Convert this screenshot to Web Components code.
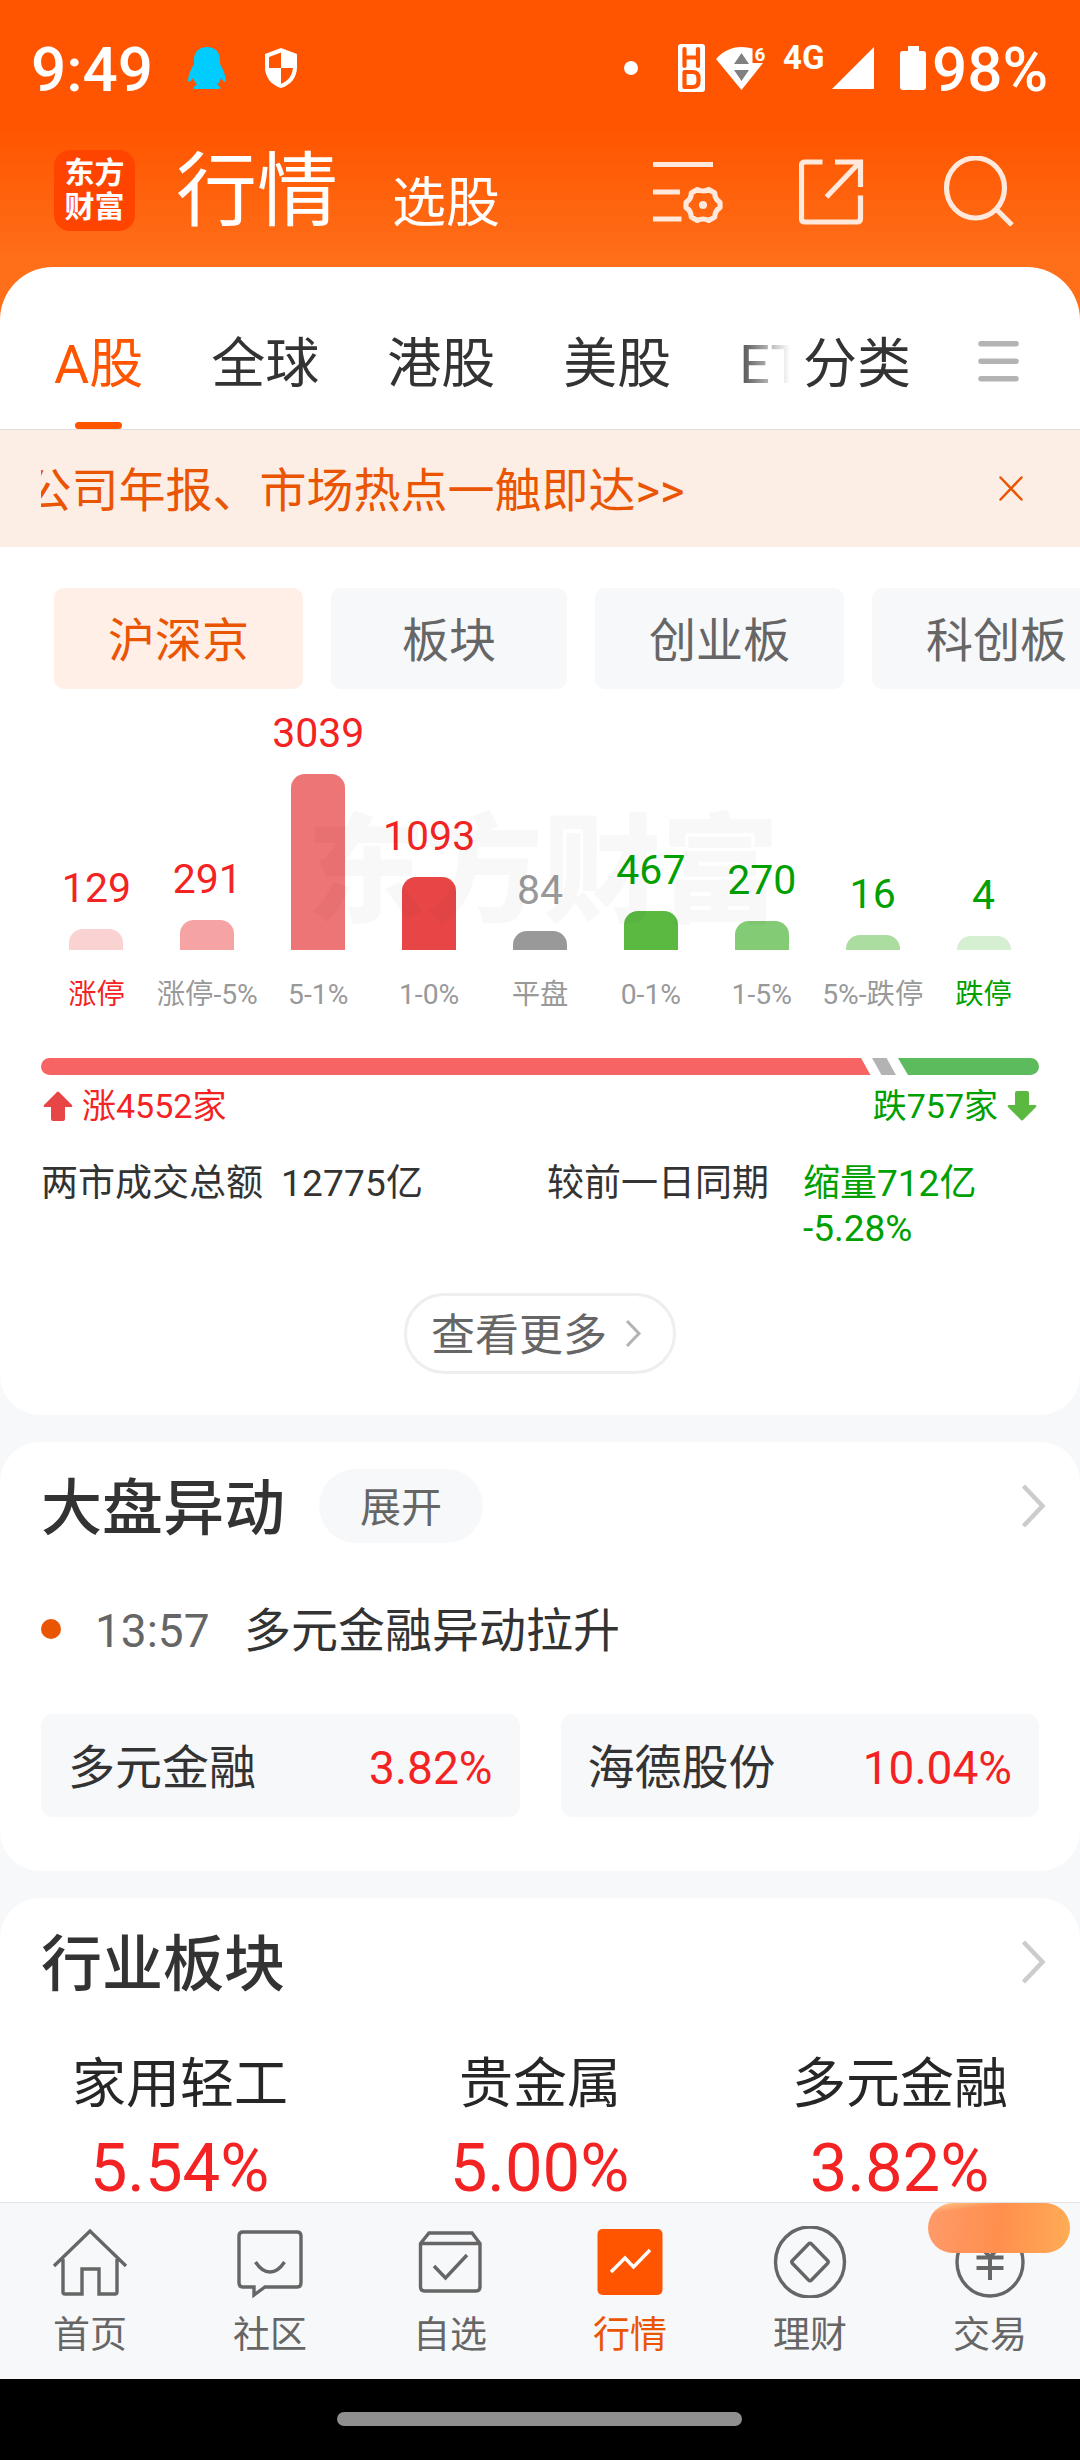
<!DOCTYPE html>
<html lang="zh-CN">
<head>
<meta charset="utf-8">
<title>行情</title>
<style>
  body {
    margin: 0;
    width: 1080px;
    height: 2460px;
    overflow: hidden;
    font-family: Roboto, "Noto Sans CJK SC", sans-serif;
    color: #333;
    --up: #f42323;
    --down: #00a000;
    --brand: #ff5500;
    --accent: #ea5504;
    --soft: #f7f8fa;
  }
</style>
</head>
<body>
<market-app></market-app>
<script>
class StatusBar extends HTMLElement {
  constructor() {
    super();
    this.attachShadow({ mode: "open" });
    this.shadowRoot.innerHTML = `
      <style>
        :host {
          display: flex;
          align-items: center;
          height: 136px;
          padding: 0 31px;
          box-sizing: border-box;
          color: white;
          font-size: 62px;
          font-weight: 500;
          line-height: 138px;
        }
        svg { display: block; flex: none; overflow: visible; }
        .time { width: 157px; padding-top: 3px; }
        .shield { margin-left: 39px; }
        .dot { width: 14px; height: 14px; border-radius: 50%; background: white; margin-left: auto; }
        .hd { margin-left: 40px; }
        .wifi { margin-left: 11px; }
        .net { margin-left: 17px; align-self: flex-start; font-size: 33px; line-height: 116px; width: 49px; font-weight: 700; }
        .battery { margin-left: 26px; }
        .level { width: 117px; margin-left: 6px; padding-top: 3px; white-space: nowrap; }
      </style>
      <span class="time">9:49</span>
      <svg width="38" height="42" viewBox="0 0 38 42" fill="#00ccff">
        <path d="M19 0C11 0 6 5 6 13l0 4C3 22 0 29 0 34c1 2 3 0 5-3 1 3 3 5 4 7-3 1-4 2-3 4h26c1-2 0-3-3-4 2-2 3-4 4-7 2 3 4 5 5 3 0-5-3-12-6-17v-4C32 5 27 0 19 0z"/>
      </svg>
      <svg class="shield" width="32" height="40" viewBox="0 0 32 40">
        <path d="M16 0 32 6v13c0 10-6 18-16 21C6 37 0 29 0 19V6z" fill="white"/>
        <path d="M16 4.5V20H4V9zM16 20h12c-1 8-5 13-12 16z" fill="#ff5500"/>
      </svg>
      <span class="dot"></span>
      <svg class="hd" width="27" height="48" viewBox="0 0 27 48">
        <rect width="27" height="48" rx="3" fill="white"/>
        <path d="M6.500 5v17M20 5v17M6.500 13.500h13.500" fill="none" stroke="#ff5500" stroke-width="4.200" stroke-linecap="round"/>
        <path d="M6.500 28h8q6 0 6 6v3q0 6-6 6h-8z" fill="none" stroke="#ff5500" stroke-width="4.200" stroke-linejoin="round"/>
      </svg>
      <svg class="wifi" width="50" height="43" viewBox="0 0 50 43">
        <path d="M0 12C8 3 17 0 25.500 0q6 0 11 1.500V16H47L25.500 43z" fill="white"/>
        <path d="M18 17 25.500 6 33 17zM18 23h15L25.500 34z" fill="#808080"/>
        <text x="38.500" y="14" font-size="19" font-weight="700" fill="white">6</text>
      </svg>
      <span class="net">4G</span>
      <svg width="42" height="42" viewBox="0 0 42 42"><path d="M42 0v42H0z" fill="white"/></svg>
      <svg class="battery" width="26" height="44" viewBox="0 0 26 44">
        <path d="M8 0h11v5h4q3 0 3 3v33q0 3-3 3H3q-3 0-3-3V8q0-3 3-3h5z" fill="white"/>
      </svg>
      <span class="level">98%</span>
    `;
  }
}
customElements.define("status-bar", StatusBar);

class AppHeader extends HTMLElement {
  constructor() {
    super();
    this.attachShadow({ mode: "open" });
    this.shadowRoot.innerHTML = `
      <style>
        :host {
          display: flex;
          align-items: flex-start;
          height: 131px;
          padding: 0 66px 0 54px;
          box-sizing: border-box;
          color: white;
        }
        .logo {
          width: 81px;
          height: 81px;
          margin-top: 14px;
          padding-top: 6px;
          box-sizing: border-box;
          border-radius: 16px;
          background: #ff4400;
          font-size: 30px;
          line-height: 34px;
          font-weight: 700;
          text-align: center;
        }
        .title { margin-left: 41px; font-size: 81px; line-height: 112px; }
        .sub { margin-left: 54px; font-size: 54px; line-height: 136px; }
        .icons { display: flex; margin: 20px 0 0 auto; }
        svg { display: block; fill: none; stroke: #ffe9dd; stroke-width: 5.200; }
        svg + svg { margin-left: 74px; }
        svg.search { margin-left: 78px; }
      </style>
      <div class="logo">东方<br>财富</div>
      <span class="title">行情</span>
      <span class="sub">选股</span>
      <div class="icons">
        <svg width="72" height="72" viewBox="0 0 72 72">
          <path d="M0 8.500h60M0 36h27M0 63h28.500"/>
          <path stroke-linejoin="round" d="M44.300 33.500q6 3 11.400 0l6 3.500q0 6 5.300 9.500v5q-5.300 3.500-5.300 9.500l-6 3.500q-5.700-3-11.400 0l-6-3.500q0-6-5.300-9.500v-5q5.300-3.500 5.300-9.500z"/>
          <circle cx="50" cy="49" r="4" fill="#ffe9dd" stroke="none"/>
        </svg>
        <svg width="66" height="72" viewBox="0 0 66 72">
          <path d="M23.500 6H6q-3.500 0-3.500 3.500v53q0 3.500 3.500 3.500h52q3.500 0 3.500-3.500V39.500M36 6h25.500v25M60 7 27.500 41"/>
        </svg>
        <svg class="search" width="71" height="72" viewBox="0 0 71 72">
          <ellipse cx="32.500" cy="32" rx="29" ry="30"/>
          <path d="m53 53 16 16"/>
        </svg>
      </div>
    `;
  }
}
customElements.define("app-header", AppHeader);

class MarketTabs extends HTMLElement {
  constructor() {
    super();
    this.attachShadow({ mode: "open" });
    this.shadowRoot.innerHTML = `
      <style>
        :host {
          display: flex;
          height: 163px;
          box-sizing: border-box;
          padding: 58px 61px 0 54px;
          border-bottom: 1px solid #dedede;
          font-size: 54px;
          line-height: 80px;
          white-space: nowrap;
        }
        .list {
          display: flex;
          gap: 68px;
          width: 736px;
          overflow: hidden;
          -webkit-mask-image: linear-gradient(to right, #000 calc(100% - 58px), transparent);
          mask-image: linear-gradient(to right, #000 calc(100% - 58px), transparent);
        }
        .active { color: var(--brand); }
        .active::after {
          content: "";
          display: block;
          width: 47px;
          height: 7px;
          margin: 17px auto 0;
          border-radius: 4px;
          background: var(--brand);
        }
        .sort { margin-left: 13px; }
        svg { display: block; margin: 16px 0 0 auto; }
      </style>
      <div class="list">
        <span class="active">A股</span><span>全球</span><span>港股</span><span>美股</span><span>ETF</span>
      </div>
      <span class="sort">分类</span>
      <svg width="41" height="42" viewBox="0 0 41 42" stroke="#b3b3b3" stroke-width="5.500" stroke-linecap="round">
        <path d="M3 2.750h35M3 20.250h35M3 37.750h35"/>
      </svg>
    `;
  }
}
customElements.define("market-tabs", MarketTabs);

class NoticeBar extends HTMLElement {
  constructor() {
    super();
    this.attachShadow({ mode: "open" });
    this.shadowRoot.innerHTML = `
      <style>
        :host {
          display: flex;
          height: 117px;
          padding: 0 57px 0 41px;
          background: #fdeee5;
          color: var(--accent);
          font-size: 47px;
          line-height: 121px;
        }
        /* the ticker is mid-scroll, so its first glyph is cut */
        .ticker { flex: 1; overflow: hidden; white-space: nowrap; }
        .ticker span { margin-left: -16.5px; }
        svg { display: block; margin-top: 46px; }
      </style>
      <div class="ticker"><span><slot></slot></span></div>
      <svg width="24" height="26" viewBox="0 0 24 26" fill="none" stroke="#ea5504" stroke-width="2.500" stroke-linecap="round">
        <path d="M1.500 1.500l21 22M22.500 1.500l-21 22"/>
      </svg>
    `;
  }
}
customElements.define("notice-bar", NoticeBar);

class FilterChip extends HTMLElement {
  constructor() {
    super();
    this.attachShadow({ mode: "open" });
    this.shadowRoot.innerHTML = `
      <style>
        :host {
          flex: none;
          min-width: 236px;
          height: 101px;
          box-sizing: border-box;
          padding: 0 54px;
          border-radius: 10px;
          background: var(--soft);
          color: #666;
          font-size: 47px;
          line-height: 106px;
          text-align: center;
          white-space: nowrap;
        }
        :host([active]) { background: #ffefe7; color: var(--accent); }
      </style>
      <slot></slot>
    `;
  }
}
customElements.define("filter-chip", FilterChip);

class BreadthChart extends HTMLElement {
  constructor() {
    super();
    this.attachShadow({ mode: "open" });
    const bars = [
      { value: 129, label: "涨停", height: 21, fill: "#fad2d2", tone: "up", strong: true },
      { value: 291, label: "涨停-5%", height: 30, fill: "#f5a3a3", tone: "up" },
      { value: 3039, label: "5-1%", height: 176, fill: "#ee7575", tone: "up" },
      { value: 1093, label: "1-0%", height: 73, fill: "#e84646", tone: "up" },
      { value: 84, label: "平盘", height: 19, fill: "#999", tone: "flat" },
      { value: 467, label: "0-1%", height: 39, fill: "#5bb942", tone: "down" },
      { value: 270, label: "1-5%", height: 29, fill: "#83cb74", tone: "down" },
      { value: 16, label: "5%-跌停", height: 15, fill: "#acdda0", tone: "down" },
      { value: 4, label: "跌停", height: 14, fill: "#d6efd2", tone: "down", strong: true }
    ];
    this.shadowRoot.innerHTML = `
      <style>
        :host { display: block; position: relative; height: 322px; padding: 0 41px; }
        .bars { display: grid; grid-template-columns: repeat(9, 1fr); height: 100%; }
        .col { display: flex; flex-direction: column; justify-content: flex-end; align-items: center; white-space: nowrap; }
        .value { font-size: 41px; line-height: 48px; margin-bottom: 17px; }
        .bar { width: 54px; border-radius: 14px 14px 0 0; }
        .label { font-size: 28.3px; line-height: 34px; padding-top: 28px; margin-bottom: -1px; color: #999; }
        .up .value, .up .strong { color: var(--up); }
        .down .value, .down .strong { color: var(--down); }
        .flat .value { color: #999; }
        .watermark {
          position: absolute;
          left: 307px;
          top: 104px;
          font-size: 118px;
          line-height: 160px;
          font-weight: 900;
          color: rgba(0, 0, 0, 0.027);
        }
      </style>
      <div class="bars">
        ${bars.map(b => `
          <div class="col ${b.tone}">
            <span class="value">${b.value}</span>
            <div class="bar" style="height:${b.height}px;background:${b.fill}"></div>
            <span class="label ${b.strong ? "strong" : ""}">${b.label}</span>
          </div>`).join("")}
      </div>
      <div class="watermark">东方财富</div>
    `;
  }
}
customElements.define("breadth-chart", BreadthChart);

class BreadthRatio extends HTMLElement {
  constructor() {
    super();
    this.attachShadow({ mode: "open" });
    this.shadowRoot.innerHTML = `
      <style>
        :host { display: block; padding: 47px 41px 0; }
        svg { display: block; }
        .counts { display: flex; justify-content: space-between; margin-top: 11px; padding: 0 2px; font-size: 34px; line-height: 40px; }
        .counts span { display: flex; align-items: center; gap: 9px; }
        .up { color: var(--up); }
        .down { color: var(--down); }
        .stats { display: grid; grid-template-columns: 506px 256px 1fr; margin-top: 35px; font-size: 37px; line-height: 45px; white-space: nowrap; }
        .stats b { font-weight: 400; margin-left: 18px; letter-spacing: 0.2px; }
      </style>
      <svg width="998" height="17" viewBox="0 0 998 17">
        <path d="M8.500 0H820l9.500 17H8.500a8.500 8.500 0 0 1 0-17z" fill="#f76464"/>
        <path d="M831 0h14.500l9.500 17h-14.500z" fill="#b3b3b3"/>
        <path d="M857 0h132.500a8.500 8.500 0 0 1 0 17H867z" fill="#5cbb5c"/>
      </svg>
      <div class="counts">
        <span class="up">
          <svg width="30" height="30" viewBox="0 0 30 30"><path d="M14 1q1-1 2 0l13 13q1 2-1 2h-6v12q0 2-2 2H10q-2 0-2-2V16H2q-2 0-1-2z" fill="#e84646"/></svg>涨4552家
        </span>
        <span class="down">
          跌757家<svg width="30" height="30" viewBox="0 0 30 30"><path d="M14 29q1 1 2 0l13-13q1-2-1-2h-6V2q0-2-2-2H10Q8 0 8 2v12H2q-2 0-1 2z" fill="#5bb942"/></svg>
        </span>
      </div>
      <div class="stats">
        <div>两市成交总额<b>12775亿</b></div>
        <div>较前一日同期</div>
        <div class="down">缩量712亿<br>-5.28%</div>
      </div>
    `;
  }
}
customElements.define("breadth-ratio", BreadthRatio);

class MoreButton extends HTMLElement {
  constructor() {
    super();
    this.attachShadow({ mode: "open" });
    this.shadowRoot.innerHTML = `
      <style>
        :host {
          display: flex;
          width: 272px;
          height: 81px;
          box-sizing: border-box;
          margin: 42px auto 0;
          padding-left: 24px;
          border: 3px solid #eee;
          border-radius: 41px;
          color: #666;
          font-size: 44px;
          line-height: 81px;
          white-space: nowrap;
        }
        svg { display: block; margin: 22px 0 0 17px; }
      </style>
      <slot></slot>
      <svg width="20" height="32" viewBox="0 0 20 32" fill="none" stroke="#b3b3b3" stroke-width="3"><path d="M3 3l12 12.500L3 28"/></svg>
    `;
  }
}
customElements.define("more-button", MoreButton);

class SectionCard extends HTMLElement {
  constructor() {
    super();
    this.attachShadow({ mode: "open" });
    this.shadowRoot.innerHTML = `
      <style>
        :host { display: block; margin-top: 27px; background: white; border-radius: 40px; box-sizing: border-box; }
        header { display: flex; height: 128px; padding: 0 32px 0 41px; }
        h2 { margin: 0; font-size: 61px; line-height: 134px; font-weight: 500; }
        svg { display: block; margin: 41px 0 0 auto; }
      </style>
      <header>
        <h2></h2>
        <slot name="action"></slot>
        <svg width="28" height="46" viewBox="0 0 28 46" fill="none" stroke="#ccc" stroke-width="4.500"><path d="M3.500 3l19 20L3.500 43"/></svg>
      </header>
      <slot></slot>
    `;
  }
  connectedCallback() {
    this.shadowRoot.querySelector("h2").textContent = this.getAttribute("heading");
  }
}
customElements.define("section-card", SectionCard);

class PillTag extends HTMLElement {
  constructor() {
    super();
    this.attachShadow({ mode: "open" });
    this.shadowRoot.innerHTML = `
      <style>
        :host {
          display: block;
          width: 164px;
          height: 74px;
          margin: 27px 0 0 34px;
          border-radius: 37px;
          background: var(--soft);
          color: #666;
          font-size: 41px;
          line-height: 79px;
          text-align: center;
        }
      </style>
      <slot></slot>
    `;
  }
}
customElements.define("pill-tag", PillTag);

class MoveEvent extends HTMLElement {
  constructor() {
    super();
    this.attachShadow({ mode: "open" });
    this.shadowRoot.innerHTML = `
      <style>
        :host { display: flex; align-items: center; height: 117px; padding-left: 41px; font-size: 47px; line-height: 120px; }
        i { width: 20px; height: 20px; border-radius: 50%; background: var(--accent); }
        time { margin-left: 34px; width: 149px; padding-top: 4px; color: #666; font-size: 46px; }
        .title { padding-top: 4px; }
      </style>
      <i></i><time></time><span class="title"><slot></slot></span>
    `;
  }
  connectedCallback() {
    this.shadowRoot.querySelector("time").textContent = this.getAttribute("time");
  }
}
customElements.define("move-event", MoveEvent);

class QuoteBox extends HTMLElement {
  constructor() {
    super();
    this.attachShadow({ mode: "open" });
    this.shadowRoot.innerHTML = `
      <style>
        :host {
          display: flex;
          flex: 1;
          justify-content: space-between;
          height: 103px;
          padding: 0 27px;
          border-radius: 12px;
          background: var(--soft);
          font-size: 47px;
          line-height: 107px;
        }
        span { padding-top: 1px; color: var(--up); font-size: 46px; }
      </style>
      <slot></slot><span></span>
    `;
  }
  connectedCallback() {
    this.shadowRoot.querySelector("span").textContent = this.getAttribute("change");
  }
}
customElements.define("quote-box", QuoteBox);

class SectorCell extends HTMLElement {
  constructor() {
    super();
    this.attachShadow({ mode: "open" });
    this.shadowRoot.innerHTML = `
      <style>
        :host { display: block; flex: 1; text-align: center; color: #262626; font-size: 54px; line-height: 80px; }
        div { padding-right: 1px; color: var(--up); font-size: 67px; line-height: 86px; }
      </style>
      <slot></slot>
      <div></div>
    `;
  }
  connectedCallback() {
    this.shadowRoot.querySelector("div").textContent = this.getAttribute("change");
  }
}
customElements.define("sector-cell", SectorCell);

// icons share one coordinate system with its origin in the middle
const NAV_ICONS = {
  home: `<path d="M-36 4 0-31 36 4M-27-3V30q0 2 2 2H-8V7H9V32H25q2 0 2-2V-3"/>`,
  chat: `<path d="M-27-30H27q4 0 4 4V21q0 4-4 4H-5L-16 33V25H-27q-4 0-4-4V-26q0-4 4-4z"/><path d="M-14.500 0Q-8 10 0 10T14.500 0"/>`,
  box: `<path d="M-29.500-18.500-21-29H22L30-18.500V25q0 4-4 4H-25.500q-4 0-4-4zM-29.500-18.500H30M-16 4-4.500 16 17-7"/>`,
  trend: `<rect x="-32.500" y="-33" width="65" height="66" rx="5" fill="#ff5500" stroke="none"/><path stroke="white" d="M-19 10-5-4 3.500 5 20-12"/>`,
  diamond: `<ellipse rx="34.500" ry="35"/><path stroke-linejoin="round" d="M-1.500-18q1.500-1.500 3 0L17.500-1.500q1.500 1.500 0 3L1.500 18q-1.500 1.500-3 0L-17.500 1.500q-1.500-1.500 0-3z"/>`,
  yen: `<ellipse rx="33" ry="34"/><path stroke-width="4" d="M-12-18 0-5 12-18M0-5V18M-13.500-4.500H13.500M-13.500 6H13.500"/>`
};

class NavItem extends HTMLElement {
  constructor() {
    super();
    this.attachShadow({ mode: "open" });
    this.shadowRoot.innerHTML = `
      <style>
        :host {
          display: flex;
          flex: 1;
          flex-direction: column;
          align-items: center;
          position: relative;
          color: #666;
          font-size: 37px;
          line-height: 45px;
        }
        :host([active]) { color: var(--accent); }
        svg { display: block; margin: 23px 0 15px; fill: none; stroke: #666; stroke-width: 3.400; }
        .badge { display: none; }
        :host([badge]) .badge {
          display: block;
          position: absolute;
          left: 28px;
          top: 0;
          width: 142px;
          height: 50px;
          border-radius: 25px;
          background:
            linear-gradient(172deg, rgba(255, 224, 150, 0.75), transparent 16%),
            linear-gradient(95deg, #ff9a6a, #ff8f4e 50%, #ffac55);
        }
      </style>
      <svg width="80" height="72" viewBox="-40 -36 80 72"></svg>
      <slot></slot>
      <div class="badge"></div>
    `;
  }
  connectedCallback() {
    this.shadowRoot.querySelector("svg").innerHTML = NAV_ICONS[this.getAttribute("icon")];
  }
}
customElements.define("nav-item", NavItem);

class BottomNav extends HTMLElement {
  constructor() {
    super();
    this.attachShadow({ mode: "open" });
    this.shadowRoot.innerHTML = `
      <style>
        :host { display: block; }
        nav { display: flex; height: 177px; box-sizing: border-box; border-top: 1px solid #e3e3e5; background: var(--soft); }
        .system { display: flex; justify-content: center; height: 48px; padding: 33px 1px 0 0; background: black; }
        .system i { width: 405px; height: 14px; border-radius: 7px; background: #8f8f8f; }
      </style>
      <nav><slot></slot></nav>
      <div class="system"><i></i></div>
    `;
  }
}
customElements.define("bottom-nav", BottomNav);

class MarketApp extends HTMLElement {
  constructor() {
    super();
    this.attachShadow({ mode: "open" });
    this.shadowRoot.innerHTML = `
      <style>
        :host {
          display: block;
          height: 2460px;
          background: linear-gradient(#ff5500 128px, #ff6f19 262px, #ff6f19 400px, var(--soft) 400px);
        }
        main { height: 1935px; overflow: hidden; }
        .sheet { height: 1148px; background: white; border-radius: 53px 53px 40px 40px; }
        .chips { display: flex; gap: 28px; padding: 41px 0 0 54px; overflow: hidden; }
        .moves { height: 429px; }
        .boxes { display: flex; gap: 41px; padding: 27px 41px 0; }
        /* runs on below the bottom nav */
        .industry { height: 520px; }
        .sectors { display: flex; padding-top: 19px; }
      </style>
      <status-bar></status-bar>
      <app-header></app-header>
      <main>
        <div class="sheet">
          <market-tabs></market-tabs>
          <notice-bar>公司年报、市场热点一触即达&gt;&gt;</notice-bar>
          <div class="chips">
            <filter-chip active>沪深京</filter-chip>
            <filter-chip>板块</filter-chip>
            <filter-chip>创业板</filter-chip>
            <filter-chip>科创板</filter-chip>
          </div>
          <breadth-chart></breadth-chart>
          <breadth-ratio></breadth-ratio>
          <more-button>查看更多</more-button>
        </div>
        <section-card class="moves" heading="大盘异动">
          <pill-tag slot="action">展开</pill-tag>
          <move-event time="13:57">多元金融异动拉升</move-event>
          <div class="boxes">
            <quote-box change="3.82%">多元金融</quote-box>
            <quote-box change="10.04%">海德股份</quote-box>
          </div>
        </section-card>
        <section-card class="industry" heading="行业板块">
          <div class="sectors">
            <sector-cell change="5.54%">家用轻工</sector-cell>
            <sector-cell change="5.00%">贵金属</sector-cell>
            <sector-cell change="3.82%">多元金融</sector-cell>
          </div>
        </section-card>
      </main>
      <bottom-nav>
        <nav-item icon="home">首页</nav-item>
        <nav-item icon="chat">社区</nav-item>
        <nav-item icon="box">自选</nav-item>
        <nav-item icon="trend" active>行情</nav-item>
        <nav-item icon="diamond">理财</nav-item>
        <nav-item icon="yen" badge>交易</nav-item>
      </bottom-nav>
    `;
  }
}
customElements.define("market-app", MarketApp);
</script>
</body>
</html>
